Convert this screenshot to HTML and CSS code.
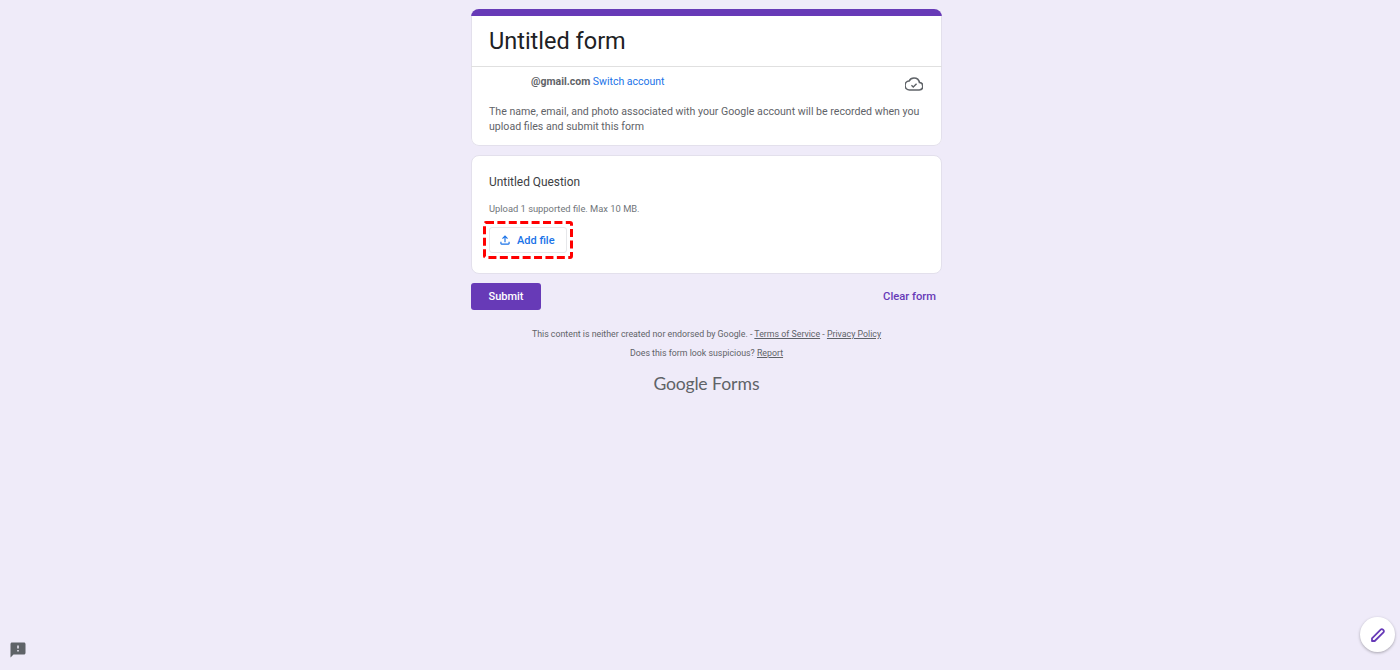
FILE: index.html
```html
<!DOCTYPE html>
<html lang="en">
<head>
    <meta charset="UTF-8">
    <meta name="viewport" content="width=device-width, initial-scale=1.0">
    <title>Untitled form</title>
    <link rel="stylesheet" href="styles.css">
</head>
<body>

    <main class="container">
        <!-- Form header -->
        <section class="card header-card">
            <div class="top-bar"></div>
            <h1 class="form-title">Untitled form</h1>
            <div class="account">
                <div class="account-row">
                    <p class="account-line"><b>@gmail.com</b> <a href="#">Switch account</a></p>
                    <svg class="cloud-icon" viewBox="0 0 24 24" width="18" height="18">
                        <path fill="none" stroke="#5f6368" stroke-width="2.2" d="M19.35 10.04A7.49 7.49 0 0 0 12 4a7.5 7.5 0 0 0-6.65 4.04A6 6 0 0 0 6 20h13a5 5 0 0 0 .35-9.96z"/>
                        <path fill="none" stroke="#5f6368" stroke-width="1.8" d="M8.6 13.6l2.4 2.4 4.4-4.4"/>
                    </svg>
                </div>
                <p class="account-note">The name, email, and photo associated with your Google account will be recorded when you upload files and submit this form</p>
            </div>
        </section>

        <!-- Question -->
        <section class="card question-card">
            <h2 class="question-title">Untitled Question</h2>
            <p class="upload-hint">Upload 1 supported file. Max 10 MB.</p>
            <div class="highlight">
                <button class="add-file" type="button">
                    <svg viewBox="0 0 24 24" width="14" height="14">
                        <path fill="#1a73e8" d="M18 15v3H6v-3H4v3c0 1.1.9 2 2 2h12c1.1 0 2-.9 2-2v-3h-2zM7 9l1.41 1.41L11 7.83V16h2V7.83l2.59 2.58L17 9l-5-5-5 5z"/>
                    </svg>
                    Add file
                </button>
                <!-- Red marker round the button -->
                <svg class="highlight-box" viewBox="0 0 90 38" width="90" height="38">
                    <rect x="1.5" y="1.5" width="87" height="35" rx="1.5" fill="none" stroke="#ff0000" stroke-width="3" stroke-dasharray="8 3.4"/>
                </svg>
            </div>
        </section>

        <div class="actions">
            <button class="submit" type="button">Submit</button>
            <a class="clear" href="#">Clear form</a>
        </div>

        <footer class="footer">
            <p>This content is neither created nor endorsed by Google. - <a href="#">Terms of Service</a> - <a href="#">Privacy Policy</a></p>
            <p>Does this form look suspicious? <a href="#">Report</a></p>
            <div class="wordmark"><span class="wordmark-google">Google</span> <span class="wordmark-forms">Forms</span></div>
        </footer>
    </main>

    <svg class="report-icon" viewBox="0 0 24 24" width="18" height="18">
        <path fill="#5f6368" d="M20 2H4c-1.1 0-2 .9-2 2v18l4-4h14c1.1 0 2-.9 2-2V4c0-1.1-.9-2-2-2zm-7 12h-2v-2h2v2zm0-4h-2V6h2v4z"/>
    </svg>

    <div class="edit-btn">
        <svg viewBox="0 0 24 24" width="18" height="18">
            <path fill="none" stroke="#673ab7" stroke-width="2.4" stroke-linejoin="round" d="M4 20v-3.6L15.6 4.8c.9-.9 2.1-.9 3 0l.6.6c.9.9.9 2.1 0 3L7.6 20H4z"/>
        </svg>
    </div>

</body>
</html>
```

FILE: styles.css
```css
html, body {
    height: 100%;
}

body {
    font-family: Roboto, Arial, sans-serif;
    background-color: #efebf9;
    color: #202124;
    margin: 0;
    overflow: hidden;
}

p, h1, h2 {
    margin: 0;
}

a {
    color: inherit;
}

.container {
    width: 471px;
    margin-left: 471px;
    padding-top: 9px;
}

.card {
    background-color: #fff;
    border: 1px solid #e3e0ec;
    border-radius: 8px;
    box-sizing: border-box;
}

.header-card {
    height: 137px;
    overflow: hidden;
    border: none;
    box-shadow: inset 0 0 0 1px #e3e0ec;
}

.top-bar {
    height: 7px;
    background-color: #673ab7;
}

.form-title {
    height: 51px;
    padding-left: 18px;
    font-size: 23.5px;
    font-weight: 400;
    line-height: 51px;
    box-sizing: border-box;
    border-bottom: 1px solid #e0e0e0;
}

.account {
    padding: 7px 19px 0 18px;
    color: #5f6368;
}

.account-row {
    display: flex;
    justify-content: space-between;
    height: 30px;
}

.account-line {
    padding-left: 42px;
    font-size: 10.5px;
    line-height: 16px;
}

.account-line b {
    font-weight: 700;
}

.account-line a {
    color: #1a73e8;
    text-decoration: none;
}

.cloud-icon {
    margin-top: 1px;
}

.account-note {
    margin-right: -5px;
    font-size: 10.6px;
    line-height: 15px;
}

.question-card {
    height: 119px;
    margin-top: 9px;
    padding: 19px 17px 0;
}

.question-title {
    font-size: 11.9px;
    font-weight: 400;
    line-height: 14px;
    color: #3c4043;
}

.upload-hint {
    margin-top: 14px;
    font-size: 9.35px;
    line-height: 12px;
    color: #70757a;
}

.highlight {
    position: relative;
    display: inline-block;
    margin: 6px 0 0 -6px;
    padding: 6px;
    line-height: 0;
}

.highlight-box {
    position: absolute;
    left: 0;
    top: 0;
}

.add-file {
    display: flex;
    align-items: center;
    gap: 5px;
    width: 78px;
    height: 26px;
    padding: 0 0 0 8px;
    font-family: inherit;
    font-size: 11px;
    font-weight: 500;
    color: #1a73e8;
    background-color: #fff;
    border: 1px solid #e6e7ea;
    border-radius: 3px;
}

.actions {
    display: flex;
    align-items: center;
    justify-content: space-between;
    margin-top: 9px;
}

.submit {
    width: 70px;
    height: 27px;
    padding: 0;
    font-family: inherit;
    font-size: 11px;
    font-weight: 500;
    color: #fff;
    background-color: #673ab7;
    border: none;
    border-radius: 3px;
}

.clear {
    margin-right: 6px;
    font-size: 11.2px;
    font-weight: 500;
    color: #673ab7;
    text-decoration: none;
}

.footer {
    margin-top: 19px;
    text-align: center;
    font-size: 8.8px;
    line-height: 11px;
    color: #5f6368;
}

.footer p + p {
    margin-top: 8px;
}

.wordmark {
    margin-top: 15px;
    font-family: Lato, Roboto, sans-serif;
    font-size: 17.6px;
    line-height: 20px;
    color: #5f6368;
}

.wordmark-google {
    letter-spacing: -0.2px;
}

.report-icon {
    position: fixed;
    left: 9px;
    top: 641px;
}

.edit-btn {
    position: fixed;
    left: 1360px;
    top: 617px;
    width: 35px;
    height: 35px;
    display: flex;
    align-items: center;
    justify-content: center;
    background-color: #fff;
    border-radius: 50%;
    box-shadow: 0 1px 3px rgba(0, 0, 0, 0.3);
}
```
